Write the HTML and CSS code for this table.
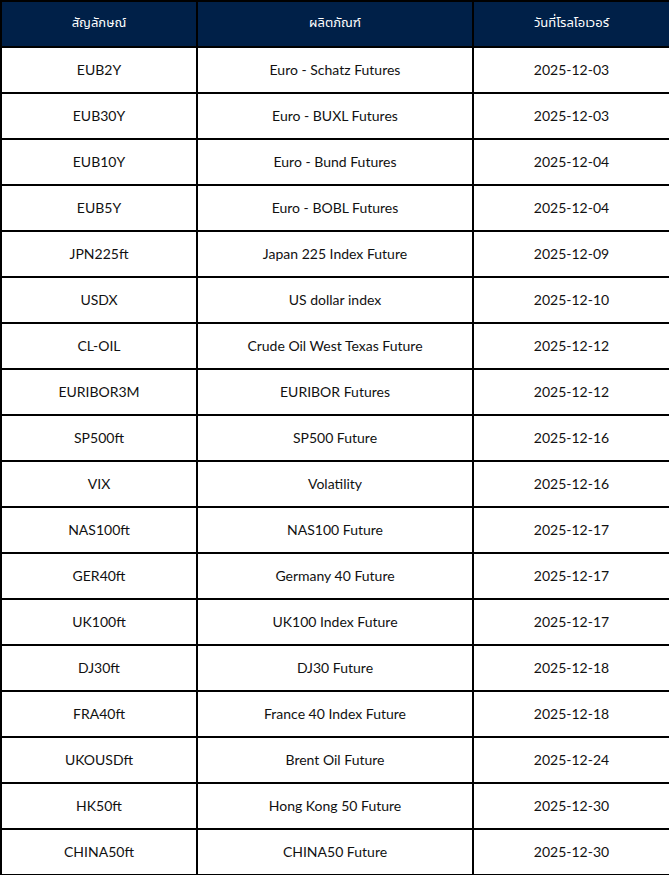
FILE: index.html
```
<!DOCTYPE html>
<html lang="th">
<head>
<meta charset="utf-8">
<link rel="stylesheet" href="styles.css">
</head>
<body>
<table class="rollover">
<colgroup><col class="c1"><col class="c2"><col class="c3"></colgroup>
<thead>
<tr><th>สัญลักษณ์</th><th>ผลิตภัณฑ์</th><th>วันที่โรลโอเวอร์</th></tr>
</thead>
<tbody>
<tr><td>EUB2Y</td><td>Euro - Schatz Futures</td><td>2025-12-03</td></tr>
<tr><td>EUB30Y</td><td>Euro - BUXL Futures</td><td>2025-12-03</td></tr>
<tr><td>EUB10Y</td><td>Euro - Bund Futures</td><td>2025-12-04</td></tr>
<tr><td>EUB5Y</td><td>Euro - BOBL Futures</td><td>2025-12-04</td></tr>
<tr><td>JPN225ft</td><td>Japan 225 Index Future</td><td>2025-12-09</td></tr>
<tr><td>USDX</td><td>US dollar index</td><td>2025-12-10</td></tr>
<tr><td>CL-OIL</td><td>Crude Oil West Texas Future</td><td>2025-12-12</td></tr>
<tr><td>EURIBOR3M</td><td>EURIBOR Futures</td><td>2025-12-12</td></tr>
<tr><td>SP500ft</td><td>SP500 Future</td><td>2025-12-16</td></tr>
<tr><td>VIX</td><td>Volatility</td><td>2025-12-16</td></tr>
<tr><td>NAS100ft</td><td>NAS100 Future</td><td>2025-12-17</td></tr>
<tr><td>GER40ft</td><td>Germany 40 Future</td><td>2025-12-17</td></tr>
<tr><td>UK100ft</td><td>UK100 Index Future</td><td>2025-12-17</td></tr>
<tr><td>DJ30ft</td><td>DJ30 Future</td><td>2025-12-18</td></tr>
<tr><td>FRA40ft</td><td>France 40 Index Future</td><td>2025-12-18</td></tr>
<tr><td>UKOUSDft</td><td>Brent Oil Future</td><td>2025-12-24</td></tr>
<tr><td>HK50ft</td><td>Hong Kong 50 Future</td><td>2025-12-30</td></tr>
<tr><td>CHINA50ft</td><td>CHINA50 Future</td><td>2025-12-30</td></tr>
</tbody>
</table>
</body>
</html>
```
FILE: styles.css
```
html, body {
  margin: 0;
  padding: 0;
  background: #ffffff;
}
.rollover {
  border-collapse: collapse;
  table-layout: fixed;
  width: 669px;
  font-family: "Lato", "Open Sans", "Noto Sans", "Noto Sans Thai", "DejaVu Sans", sans-serif;
  font-size: 14px;
  color: #111111;
}
.c1 { width: 196px; }
.c2 { width: 276px; }
.c3 { width: 197px; }
.rollover th,
.rollover td {
  border: 2px solid #000000;
  height: 42px;
  padding: 0 4px 2px;
  text-align: center;
  vertical-align: middle;
  white-space: nowrap;
}
.rollover th {
  background: #002048;
  color: #ffffff;
  font-weight: normal;
  font-family: "Open Sans", "Noto Sans", "Noto Sans Thai", sans-serif;
  font-size: 13px;
}
```
